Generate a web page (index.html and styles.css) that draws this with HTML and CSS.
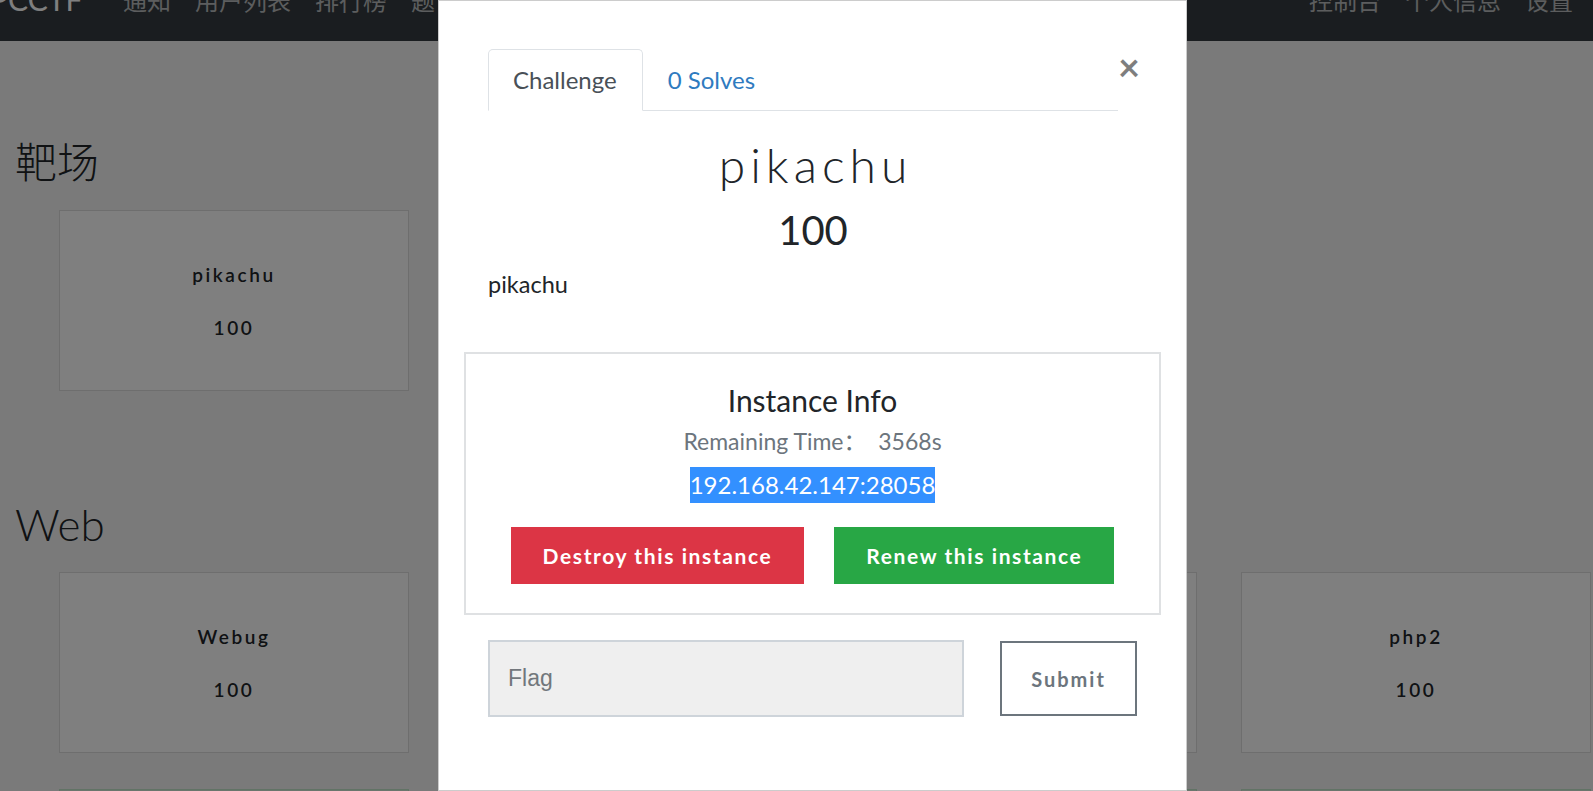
FILE: index.html
```html
<!DOCTYPE html>
<html lang="zh">
<head>
<meta charset="utf-8">
<title>Challenges</title>
<link rel="stylesheet" href="styles.css">
</head>
<body>
<nav class="navbar">
  <div class="brand">PCCTF</div>
  <ul class="nav-left">
    <li>通知</li><li>用户列表</li><li>排行榜</li><li>题目</li>
  </ul>
  <ul class="nav-right">
    <li>控制台</li><li>个人信息</li><li>设置</li>
  </ul>
</nav>
<main class="page">
  <section class="category">
    <h2 class="cat-title cjk">靶场</h2>
    <div class="card-grid">
      <div class="chal-card"><p class="chal-name">pikachu</p><p class="chal-value">100</p></div>
    </div>
  </section>
  <section class="category category-next">
    <h2 class="cat-title">Web</h2>
    <div class="card-grid">
      <div class="chal-card"><p class="chal-name">Webug</p><p class="chal-value">100</p></div>
      <div class="chal-card"><p class="chal-name">sqli</p><p class="chal-value">100</p></div>
      <div class="chal-card"><p class="chal-name">php1</p><p class="chal-value">100</p></div>
      <div class="chal-card"><p class="chal-name">php2</p><p class="chal-value">100</p></div>
      <div class="chal-card solved"><p class="chal-name">xss</p><p class="chal-value">100</p></div>
      <div class="chal-card solved"><p class="chal-name">dvwa</p><p class="chal-value">100</p></div>
      <div class="chal-card solved"><p class="chal-name">upload</p><p class="chal-value">100</p></div>
      <div class="chal-card solved"><p class="chal-name">bwapp</p><p class="chal-value">100</p></div>
    </div>
  </section>
</main>
<div class="backdrop"></div>
<div class="modal">
  <div class="modal-head">
    <ul class="tabs">
      <li class="tab active">Challenge</li>
      <li class="tab link">0 Solves</li>
    </ul>
    <button class="close" type="button">×</button>
  </div>
  <h1 class="chal-title">pikachu</h1>
  <h2 class="chal-points">100</h2>
  <p class="chal-desc">pikachu</p>
  <div class="instance">
    <h4 class="inst-title">Instance Info</h4>
    <p class="inst-time">Remaining Time：&nbsp;&nbsp;3568s</p>
    <p class="inst-addr"><span class="selected">192.168.42.147:28058</span></p>
    <div class="inst-actions">
      <button class="btn btn-danger" type="button">Destroy this instance</button>
      <button class="btn btn-success" type="button">Renew this instance</button>
    </div>
  </div>
  <form class="flag-row">
    <input class="flag-input" type="text" placeholder="Flag">
    <button class="submit" type="button">Submit</button>
  </form>
</div>
</body>
</html>
```

FILE: styles.css
```css
* { box-sizing: border-box; }
html, body { margin: 0; padding: 0; }
body {
  font-family: "Lato", "Noto Sans CJK SC", sans-serif;
  background: #f5f5f5;
  color: #212529;
  width: 1593px;
  height: 791px;
  overflow: hidden;
}

/* navbar (partially scrolled off) */
.navbar {
  height: 41px;
  background: #343a40;
  display: flex;
  align-items: flex-start;
  overflow: hidden;
  padding-right: 20px;
}
.brand {
  width: 113px;
  margin-left: -10px;
  margin-top: -16px;
  font-size: 30px;
  line-height: 30px;
  color: #fff;
}
.nav-left, .nav-right {
  list-style: none;
  margin: -12px 0 0 0;
  padding: 0;
  display: flex;
  gap: 24px;
  font-family: "Noto Sans CJK SC", sans-serif;
  font-size: 24px;
  line-height: 24px;
  color: #b8babc;
}
.nav-left { margin-left: 20px; }
.nav-right { margin-left: auto; }

/* page */
.page { padding: 94px 0 0 15px; }
.category-next { margin-top: 106px; }
.cat-title {
  margin: 0 0 20px 0;
  font-family: "Lato", "Noto Sans CJK SC", sans-serif;
  font-weight: 300;
  font-size: 44px;
  line-height: 55px;
  color: #212529;
}
.cat-title.cjk { font-size: 42px; }
.card-grid {
  margin-left: 44px;
  display: grid;
  grid-template-columns: repeat(4, 350px);
  column-gap: 44px;
  row-gap: 36px;
}
.chal-card {
  height: 181px;
  background: #fff;
  border: 1px solid #dcdcdc;
  display: flex;
  flex-direction: column;
  align-items: center;
  justify-content: center;
  gap: 30px;
}
.chal-card.solved { background: #d4edda; border-color: #c3e6cb; }
.chal-name, .chal-value {
  margin: 0;
  font-size: 19px;
  line-height: 23px;
  font-weight: 600;
  letter-spacing: 2.6px;
  color: #212529;
}

.backdrop {
  position: fixed;
  inset: 0;
  background: rgba(0, 0, 0, 0.5);
}

/* modal */
.modal {
  position: fixed;
  top: 0;
  left: 438px;
  width: 749px;
  height: 791px;
  background: #fff;
  border: 1px solid rgba(0, 0, 0, 0.2);
  padding: 48px 48px 0 49px;
}
.modal-head { display: flex; align-items: flex-start; }
.tabs {
  flex: 1;
  list-style: none;
  margin: 0;
  padding: 0;
  display: flex;
  border-bottom: 1px solid #dee2e6;
}
.tab {
  margin-bottom: -1px;
  padding: 15px 25px 15px 24px;
  font-size: 24px;
  line-height: 30px;
  border: 1px solid transparent;
  border-top-left-radius: 5px;
  border-top-right-radius: 5px;
}
.tab.active {
  color: #495057;
  background: #fff;
  border-color: #dee2e6 #dee2e6 #fff;
}
.tab.link { color: #2f7bbf; }
.close {
  width: 20px;
  margin-top: 2px;
  padding: 0;
  background: none;
  border: 0;
  font-family: "Lato", sans-serif;
  font-size: 38px;
  font-weight: 700;
  line-height: 30px;
  color: #000;
  opacity: 0.5;
  text-align: center;
}

.chal-title {
  margin: 25px 0 0 0;
  padding-left: 5px;
  text-align: center;
  font-weight: 300;
  font-size: 48px;
  line-height: 57px;
  letter-spacing: 5px;
  color: #212529;
}
.chal-points {
  margin: 13px 0 0 0;
  text-align: center;
  font-weight: 400;
  font-size: 40px;
  line-height: 48px;
  color: #212529;
}
.chal-desc {
  margin: 15px 0 0 0;
  font-size: 23.5px;
  line-height: 31px;
}

.instance {
  margin: 52px -23px 0 -24px;
  border: 2px solid #dfe1e3;
  padding: 29px 0 29px 0;
  text-align: center;
}
.inst-title {
  margin: 0;
  font-weight: 400;
  font-size: 30px;
  line-height: 35px;
  color: #212529;
}
.inst-time {
  margin: 8px 0 0 0;
  font-size: 23px;
  line-height: 31px;
  color: #6c757d;
}
.inst-addr {
  margin: 10px 0 0 0;
  font-size: 24px;
  line-height: 36px;
  height: 36px;
}
.selected {
  display: inline-block;
  background: #3390ff;
  color: #fff;
}
.inst-actions {
  margin-top: 24px;
  display: flex;
  justify-content: center;
  gap: 30px;
}
.btn {
  height: 57px;
  padding: 0 32px;
  border: 0;
  border-radius: 0;
  font-family: "Lato", sans-serif;
  font-size: 21px;
  font-weight: 700;
  color: #fff;
  letter-spacing: 1.6px;
}
.btn-danger { background: #dc3545; }
.btn-success { background: #28a745; }

.flag-row {
  margin-top: 25px;
  display: flex;
  align-items: center;
  gap: 36px;
}
.flag-input {
  width: 476px;
  height: 77px;
  background: #efefef;
  border: 2px solid #ced4da;
  padding: 0 18px;
  font-family: "Liberation Sans", Arial, sans-serif;
  font-size: 23px;
  color: #495057;
}
.flag-input::placeholder { color: #72777c; }
.submit {
  width: 137px;
  height: 75px;
  background: #fff;
  border: 2px solid #6c757d;
  font-family: "Lato", sans-serif;
  font-size: 20px;
  font-weight: 700;
  letter-spacing: 2px;
  color: #6c757d;
  padding: 0;
}
```
